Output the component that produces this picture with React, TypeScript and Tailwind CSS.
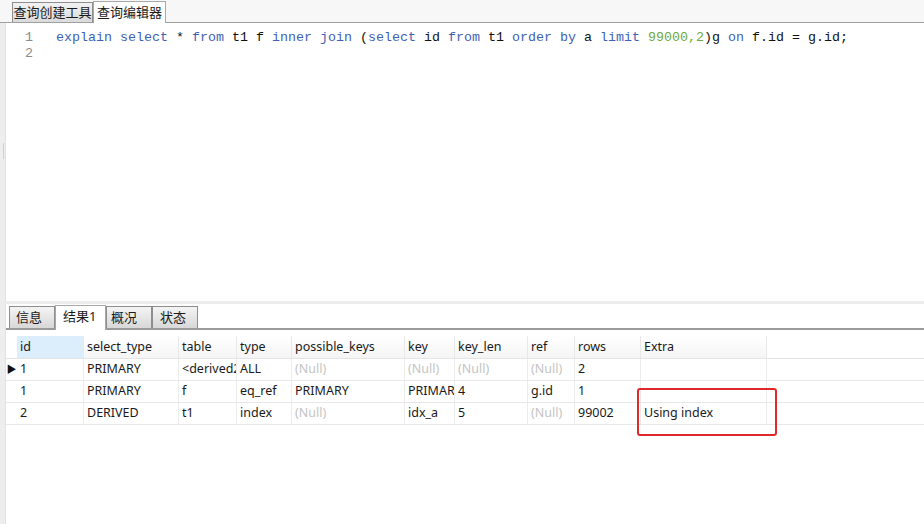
import React from 'react';

const ui = { fontFamily: '"Noto Sans", "Noto Sans CJK SC", sans-serif' };
const mono = { fontFamily: '"Liberation Mono", monospace' };

type Tok = [string, 'k' | 'n' | 't'];

const code: Tok[] = [
  ['explain', 'k'], [' ', 't'], ['select', 'k'], [' * ', 't'], ['from', 'k'], [' t1 f ', 't'],
  ['inner', 'k'], [' ', 't'], ['join', 'k'], [' (', 't'], ['select', 'k'], [' id ', 't'],
  ['from', 'k'], [' t1 ', 't'], ['order', 'k'], [' ', 't'], ['by', 'k'], [' a ', 't'],
  ['limit', 'k'], [' ', 't'], ['99000,2', 'n'], [')g ', 't'], ['on', 'k'], [' f.id = g.id;', 't'],
];

const cols = [
  { name: 'id', w: 'w-[67px]' },
  { name: 'select_type', w: 'w-[95px]' },
  { name: 'table', w: 'w-[58px]' },
  { name: 'type', w: 'w-[55px]' },
  { name: 'possible_keys', w: 'w-[113px]' },
  { name: 'key', w: 'w-[50px]' },
  { name: 'key_len', w: 'w-[73px]' },
  { name: 'ref', w: 'w-[47px]' },
  { name: 'rows', w: 'w-[66px]' },
  { name: 'Extra', w: 'w-[126px]' },
];

const rows: (string | null)[][] = [
  ['1', 'PRIMARY', '<derived2>', 'ALL', null, null, null, null, '2', ''],
  ['1', 'PRIMARY', 'f', 'eq_ref', 'PRIMARY', 'PRIMARY', '4', 'g.id', '1', ''],
  ['2', 'DERIVED', 't1', 'index', null, 'idx_a', '5', null, '99002', 'Using index'],
];

export default function App() {
  return (
    <div className="w-[924px] h-[524px] bg-white flex flex-col overflow-hidden text-[12.5px] text-[#1a1a1a]" style={ui}>
      {/* top tabs */}
      <div className="h-[23px] bg-[#f7f7f7] flex items-end pl-[12px] border-b border-[#a0a0a0] shrink-0">
        <div className="h-[20px] w-[81px] flex items-center justify-center bg-gradient-to-b from-[#f2f2f2] to-[#dadada] border border-[#8e8e8e] border-b-0 text-[13px] leading-none">查询创建工具</div>
        <div className="h-[22px] w-[73px] flex items-center justify-center bg-white border border-[#a8a8a8] border-b-0 -mb-px text-[13px] leading-none">查询编辑器</div>
      </div>

      {/* editor */}
      <div className="h-[278px] flex shrink-0">
        <div className="w-[6px] bg-[#eeeeee] border-r border-[#e2e2e2] flex flex-col">
          <div className="h-[120px]" />
          <div className="h-[16px] w-[4px] border-r border-[#cfcfcf]" />
        </div>
        <div className="flex-1 flex pt-[7px] text-[13.33px] leading-[16px]" style={mono}>
          <div className="w-[27px] text-right text-[#8c8c8c]">
            <div>1</div>
            <div>2</div>
          </div>
          <div className="pl-[23px] whitespace-pre">
            <div>
              {code.map(([s, k], i) => (
                <span key={i} className={k === 'k' ? 'text-[#3d62b3]' : k === 'n' ? 'text-[#6ea83c]' : 'text-[#111]'}>{s}</span>
              ))}
            </div>
          </div>
        </div>
      </div>

      {/* splitter */}
      <div className="h-[3px] bg-[#ececec] shrink-0" />

      {/* results */}
      <div className="flex-1 flex min-h-0">
        <div className="w-[6px] bg-[#eeeeee] border-r border-[#e2e2e2]" />
        <div className="flex-1 flex flex-col">
          <div className="h-[25px] mt-[1px] flex items-end pl-[3px] border-b-2 border-[#9a9a9a] shrink-0 text-[13px] leading-none">
            <div className="h-[22px] w-[46px] pl-[6px] flex items-center bg-gradient-to-b from-[#f4f4f4] to-[#d8d8d8] border border-[#8e8e8e] border-b-0">信息</div>
            <div className="h-[25px] w-[51px] pl-[7px] pb-[4px] flex items-center bg-white border border-[#a8a8a8] border-b-0 -mb-[2px]">结果1</div>
            <div className="h-[22px] w-[46px] pl-[4px] flex items-center bg-gradient-to-b from-[#f4f4f4] to-[#d8d8d8] border border-[#8e8e8e] border-b-0">概况</div>
            <div className="h-[22px] w-[46px] pl-[7px] flex items-center bg-gradient-to-b from-[#f4f4f4] to-[#d8d8d8] border border-[#8e8e8e] border-b-0">状态</div>
          </div>

          <div className="pt-[6px] relative">
            <div className="flex h-[23px] border-b border-[#e4e4e4]">
              <div className="w-[11px]" />
              {cols.map((c, i) => (
                <div
                  key={c.name}
                  className={`${c.w} px-[3px] flex items-center border-r border-[#e8e8e8] ${i === 0 ? 'bg-[#dcedfb]' : 'bg-gradient-to-b from-white to-[#f5f5f5]'}`}
                >
                  {c.name}
                </div>
              ))}
            </div>
            {rows.map((r, ri) => (
              <div key={ri} className="flex h-[22px] border-b border-[#e8e8e8]">
                <div className="w-[11px] flex items-center justify-center text-[10px] text-[#111]">{ri === 0 ? '▶' : ''}</div>
                {r.map((v, ci) => (
                  <div
                    key={ci}
                    className={`${cols[ci].w} px-[3px] flex items-center border-r border-[#ececec] overflow-hidden whitespace-nowrap text-clip ${v === null ? 'text-[#c4c4c4]' : ''}`}
                  >
                    {v === null ? '(Null)' : v}
                  </div>
                ))}
              </div>
            ))}
            <div className="absolute left-[631px] top-[58px] w-[140px] h-[48px] border-2 border-[#e02a2a] rounded-[3px]" />
          </div>
        </div>
      </div>
    </div>
  );
}
